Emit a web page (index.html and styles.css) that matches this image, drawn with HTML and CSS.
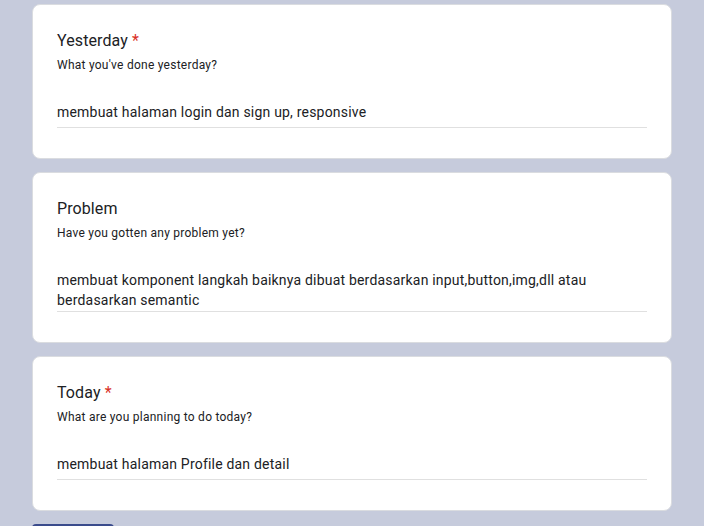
FILE: index.html
```html
<!DOCTYPE html>
<html lang="id">
<head>
<meta charset="utf-8">
<title>Form</title>
<link rel="stylesheet" href="styles.css">
</head>
<body>
<main class="form">
  <section class="card">
    <div class="q-title">Yesterday <span class="req">*</span></div>
    <div class="q-desc">What you've done yesterday?</div>
    <div class="answer">membuat halaman login dan sign up, responsive</div>
  </section>
  <section class="card">
    <div class="q-title">Problem</div>
    <div class="q-desc">Have you gotten any problem yet?</div>
    <div class="answer answer-tight">membuat komponent langkah baiknya dibuat berdasarkan input,button,img,dll atau berdasarkan semantic</div>
  </section>
  <section class="card">
    <div class="q-title">Today <span class="req">*</span></div>
    <div class="q-desc">What are you planning to do today?</div>
    <div class="answer">membuat halaman Profile dan detail</div>
  </section>
  <div class="actions">
    <button class="submit" type="button">Submit</button>
  </div>
</main>
</body>
</html>
```
FILE: styles.css
```css
html, body {
  margin: 0;
  padding: 0;
  background: #c6cbdc;
  font-family: Roboto, "Liberation Sans", Arial, sans-serif;
  color: #202124;
  overflow: hidden;
}

.form {
  width: 640px;
  margin: 0 auto;
  padding-top: 4px;
  display: flex;
  flex-direction: column;
  gap: 13px;
}

.card {
  background: #ffffff;
  border: 1px solid #dadce0;
  border-radius: 8px;
  padding: 24px 24px 30px;
}

.q-title {
  font-size: 16px;
  line-height: 24px;
  letter-spacing: 0.1px;
  color: #202124;
}

.req {
  color: #d93025;
}

.q-desc {
  margin-top: 4px;
  font-size: 12px;
  line-height: 16px;
  letter-spacing: 0.25px;
  color: #202124;
}

.answer {
  margin-top: 29px;
  font-size: 14px;
  line-height: 20px;
  letter-spacing: 0.2px;
  color: #202124;
  padding-bottom: 5px;
  border-bottom: 1px solid #e0e0e0;
}

.answer-tight {
  padding-bottom: 1px;
}

.actions {
  height: 40px;
}

.submit {
  display: block;
  border: none;
  background: #3a4b8c;
  color: #ffffff;
  font-family: Roboto, "Liberation Sans", Arial, sans-serif;
  font-size: 14px;
  font-weight: 500;
  width: 82px;
  height: 36px;
  border-radius: 4px;
}
```
